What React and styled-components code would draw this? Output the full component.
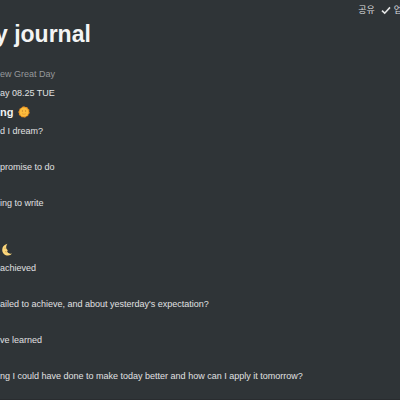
import React from "react";
import styled, { createGlobalStyle } from "styled-components";

const GlobalStyle = createGlobalStyle`
  * { box-sizing: border-box; }
  body {
    margin: 0;
    background: #2f3437;
    color: #e0e1e2;
    font-family: "Liberation Sans", "Noto Sans CJK KR", sans-serif;
    font-size: 9px;
  }
`;

const Page = styled.div`
  min-height: 100vh;
  overflow: hidden;
  background: #2f3437;
  border-bottom: 1px solid #292c2f;
`;

const TopBar = styled.header`
  display: flex;
  justify-content: flex-end;
  align-items: center;
  gap: 6px;
  height: 20px;
  margin-right: -2px;
`;

const BarButton = styled.button`
  display: flex;
  align-items: center;
  gap: 3px;
  padding: 0;
  border: 0;
  background: none;
  color: #dddedf;
  font: 9px/20px "Noto Sans CJK KR", sans-serif;
  white-space: nowrap;
`;

const Title = styled.h1`
  margin: 0 0 16px -5px;
  color: #f3f4f4;
  font-size: 23px;
  line-height: 28px;
  white-space: nowrap;
`;

const Line = styled.p`
  margin: 0 0 ${(p) => (p.$spaced ? 18 : 0)}px;
  color: ${(p) => (p.$muted ? "#96999b" : "#e0e1e2")};
  line-height: ${(p) => (p.$muted ? 20 : 18)}px;
  white-space: nowrap;
`;

const Heading = styled.h2`
  display: flex;
  align-items: center;
  gap: 5px;
  height: 20px;
  margin: 0;
  padding-left: ${(p) => p.$inset || 0}px;
  color: #f0f1f1;
  font-size: 11px;
  line-height: 20px;
`;

const Section = styled.section`
  padding-bottom: 9px;
`;

const Check = () => (
  <svg width="10" height="10" viewBox="0 0 10 10" aria-hidden="true">
    <path d="M1 5.6 3.7 8.2 9 2.4" fill="none" stroke="#e4e5e5" strokeWidth="1.6" />
  </svg>
);

const Sun = () => (
  <svg width="12" height="12" viewBox="0 0 12 12" role="img" aria-label="Sun">
    <path
      d="M6 .2 7.5 1 9.2 1.1 10 2.6 11.4 3.7 11.2 5.4 11.8 7 10.6 8.3 10.1 10 8.4 10.5 7 11.7 5.4 11.2 3.6 11.3 2.5 10 .9 9.1 1 7.4.2 5.9 1.2 4.4 1.5 2.7 3.1 2 4.3.8Z"
      fill="#e08b22"
    />
    <circle cx="6" cy="6" r="4.5" fill="#fdbd3d" />
    <ellipse cx="4.3" cy="5" rx=".4" ry=".7" fill="#a56222" />
    <ellipse cx="7.7" cy="5" rx=".4" ry=".7" fill="#a56222" />
    <path d="M4 7.7Q6 9 8 7.7" fill="none" stroke="#d98c30" strokeWidth=".6" />
  </svg>
);

const Moon = () => (
  <svg width="10" height="13" viewBox="0 0 10 13" role="img" aria-label="Moon">
    <path
      d="M5.4.8C2 1.6.2 4.2.2 6.9.3 10.2 2.9 12.6 6 12.6 7.8 12.6 9.1 11.8 9.9 10.6 8.3 10.9 6.6 10.4 5.6 9.2L5.1 8.2 5.8 7.2 4.4 5.7C3.9 4 4.3 2.3 5.4.8Z"
      fill="#fcd77b"
    />
    <path d="M2.4 5.2h1.2M3 8.6 4.6 9" stroke="#bd8e44" strokeWidth=".7" />
  </svg>
);

export default function App() {
  return (
    <>
      <GlobalStyle />
      <Page>
        <TopBar>
          <BarButton>공유</BarButton>
          <BarButton>
            <Check />
            업
          </BarButton>
        </TopBar>
        <main>
          <Title>y journal</Title>
          <Line $muted>ew Great Day</Line>
          <Line>ay 08.25 TUE</Line>
          <Section>
            <Heading>
              ng <Sun />
            </Heading>
            <Line $spaced>d I dream?</Line>
            <Line $spaced>promise to do</Line>
            <Line $spaced>ing to write</Line>
          </Section>
          <Section>
            <Heading $inset={2}>
              <Moon />
            </Heading>
            <Line $spaced>achieved</Line>
            <Line $spaced>ailed to achieve, and about yesterday's expectation?</Line>
            <Line $spaced>ve learned</Line>
            <Line>ng I could have done to make today better and how can I apply it tomorrow?</Line>
          </Section>
        </main>
      </Page>
    </>
  );
}
